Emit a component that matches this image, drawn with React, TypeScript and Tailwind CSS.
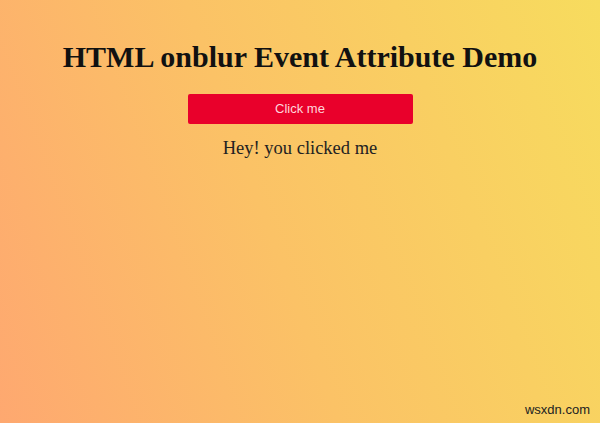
export default function App() {
  return (
    <div className="relative w-[600px] h-[423px] overflow-hidden bg-[linear-gradient(70deg,#fea870_0%,#fbc266_45%,#f7dc5e_100%)]">
      <div className="flex flex-col items-center pt-[39px]">
        <h1 className="font-['Liberation_Serif',serif] font-bold text-[30px] leading-[35px] text-[#111]">
          HTML onblur Event Attribute Demo
        </h1>
        <button className="mt-[20px] w-[225px] h-[30px] rounded-[2px] bg-[#e9002b] font-['Liberation_Sans',Arial,sans-serif] text-[13px] text-[#ffd6dc]">
          Click me
        </button>
        <p className="mt-[13px] font-['Liberation_Serif',serif] text-[18.5px] leading-[23px] text-[#222]">
          Hey! you clicked me
        </p>
      </div>
      <div className="absolute right-[10px] bottom-[4px] font-['Liberation_Sans',Arial,sans-serif] text-[13px] text-[#222]">
        wsxdn.com
      </div>
    </div>
  );
}
